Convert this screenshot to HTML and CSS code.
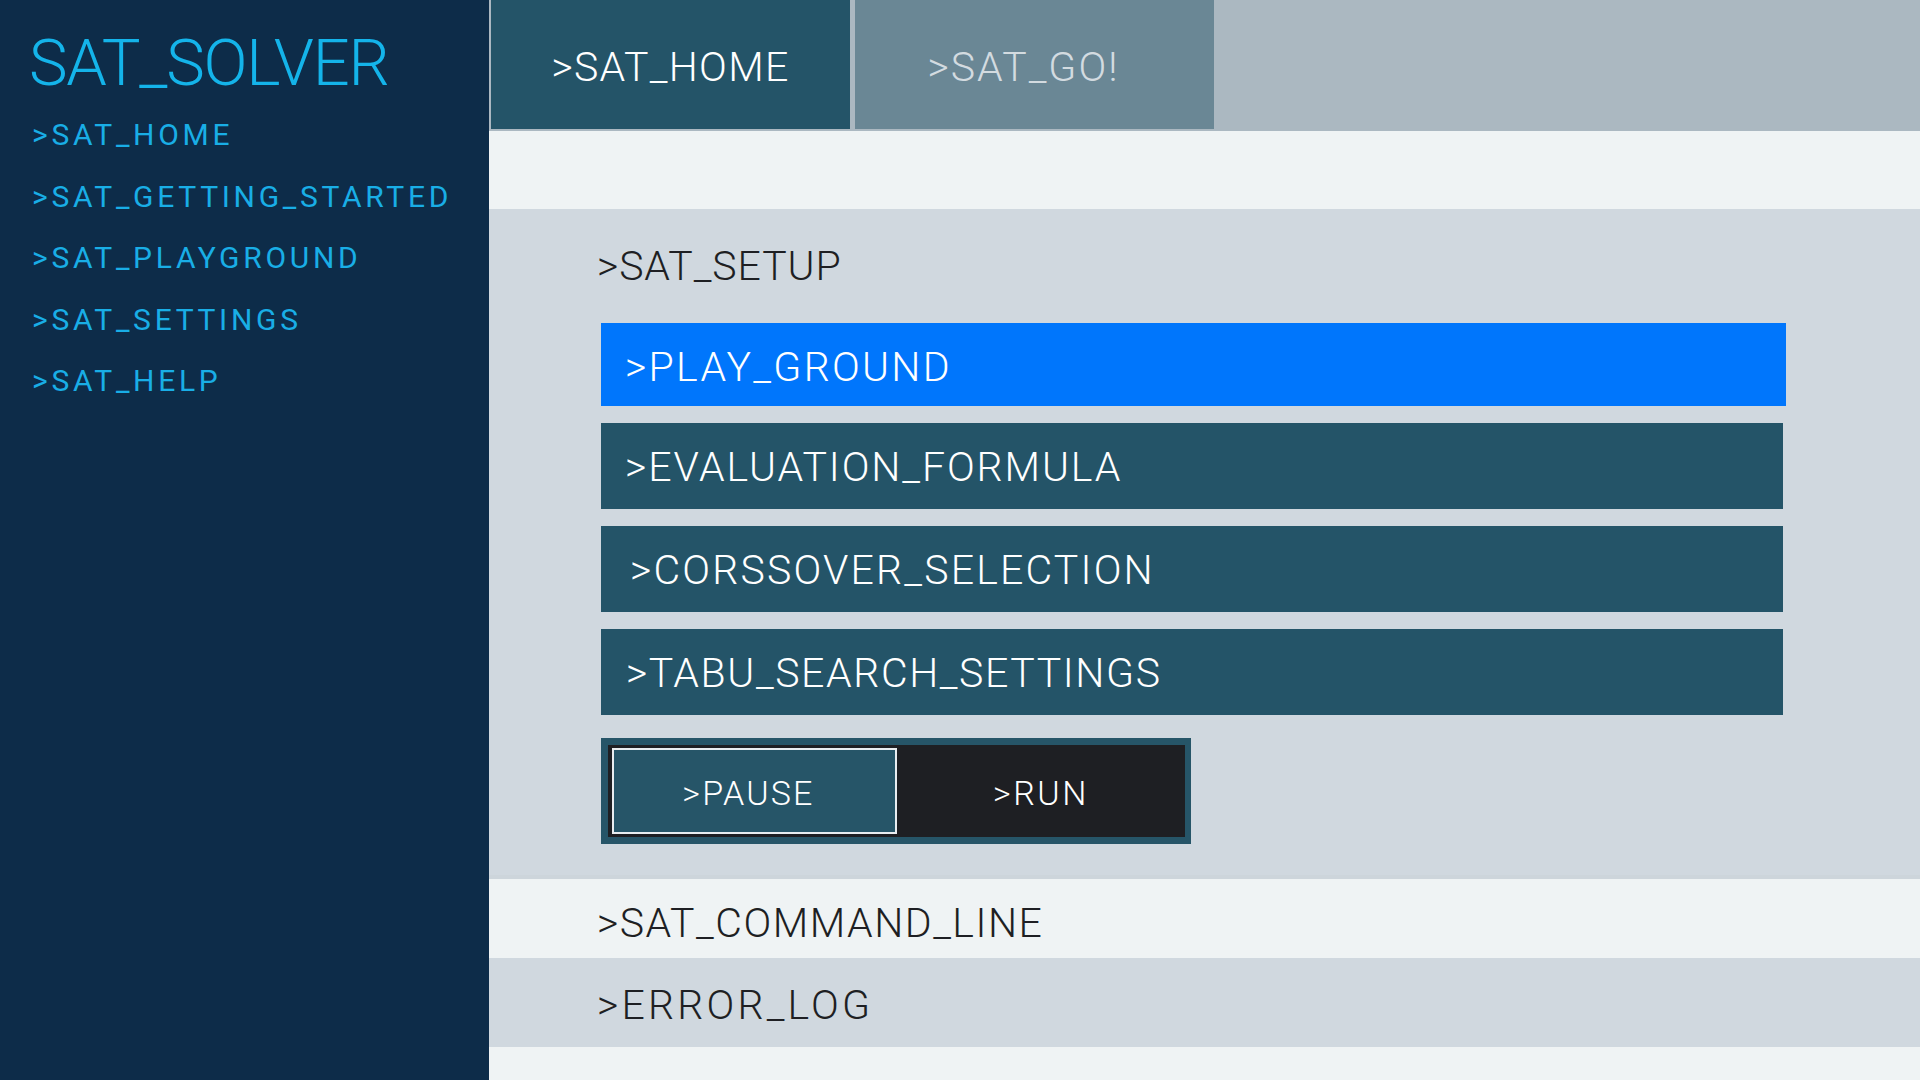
FILE: index.html
```html
<!DOCTYPE html>
<html lang="en">
<head>
<meta charset="utf-8">
<title>SAT_SOLVER</title>
<link rel="stylesheet" href="styles.css">
</head>
<body>
<div class="app">
  <aside class="sidebar">
    <h1 class="brand">SAT_SOLVER</h1>
    <nav class="side-nav">
      <a class="side-link">&gt;SAT_HOME</a>
      <a class="side-link">&gt;SAT_GETTING_STARTED</a>
      <a class="side-link">&gt;SAT_PLAYGROUND</a>
      <a class="side-link">&gt;SAT_SETTINGS</a>
      <a class="side-link">&gt;SAT_HELP</a>
    </nav>
  </aside>
  <main class="main">
    <header class="tabbar">
      <div class="tab tab-active">&gt;SAT_HOME</div>
      <div class="tab tab-muted">&gt;SAT_GO!</div>
    </header>
    <div class="band-light band-top"></div>
    <section class="setup">
      <h2 class="section-title">&gt;SAT_SETUP</h2>
      <div class="option-list">
        <div class="option option-active">&gt;PLAY_GROUND</div>
        <div class="option">&gt;EVALUATION_FORMULA</div>
        <div class="option option-indent">&gt;CORSSOVER_SELECTION</div>
        <div class="option option-indent-sm">&gt;TABU_SEARCH_SETTINGS</div>
      </div>
      <div class="toggle">
        <div class="toggle-btn toggle-on">&gt;PAUSE</div>
        <div class="toggle-btn">&gt;RUN</div>
      </div>
    </section>
    <div class="row row-light">&gt;SAT_COMMAND_LINE</div>
    <div class="row row-gray row-wide">&gt;ERROR_LOG</div>
    <div class="band-light band-fill"></div>
  </main>
</div>
</body>
</html>
```

FILE: styles.css
```css
* { box-sizing: border-box; }

html, body {
  margin: 0;
  padding: 0;
  height: 100%;
}

body {
  font-family: "Roboto", "Liberation Sans", sans-serif;
  font-weight: 300;
  background: #eff3f4;
}

.app {
  display: flex;
  width: 1920px;
  height: 1080px;
  overflow: hidden;
}

/* ---------- Sidebar ---------- */
.sidebar {
  width: 489px;
  flex: 0 0 489px;
  background: #0d2c49;
  padding: 23px 0 0 30px;
}

.brand {
  margin: 0 0 0 -1px;
  font-size: 65px;
  line-height: 80px;
  font-weight: 300;
  color: #14b4ea;
  letter-spacing: -1.2px;
}

.side-nav {
  display: flex;
  flex-direction: column;
  margin: 1px 0 0 2px;
}

.side-link {
  display: block;
  font-size: 30px;
  line-height: 61.5px;
  font-weight: 400;
  letter-spacing: 3.7px;
  color: #19aee6;
}

/* ---------- Main ---------- */
.main {
  flex: 1;
  display: flex;
  flex-direction: column;
  min-width: 0;
}

.tabbar {
  height: 131px;
  flex: 0 0 131px;
  background: #abb8c1;
  display: flex;
  gap: 5px;
  padding-left: 2px;
  align-items: flex-start;
}

.tab {
  width: 359px;
  height: 129px;
  display: flex;
  align-items: center;
  justify-content: center;
  padding-top: 5px;
  font-size: 41px;
  font-weight: 300;
  letter-spacing: 1.3px;
}

.tab-active {
  background: #245468;
  color: #ffffff;
}

.tab-muted {
  background: #6a8795;
  color: #d3dbe0;
  padding-right: 22px;
  letter-spacing: 2px;
}

.band-light {
  background: #eff3f4;
}

.band-top {
  height: 78px;
  flex: 0 0 78px;
}

.band-fill {
  flex: 1;
}

.setup {
  background: #d0d8df;
  height: 670px;
  flex: 0 0 670px;
  padding: 33px 0 0 108px;
  border-bottom: 4px solid #cdd5db;
}

.section-title {
  margin: 0;
  font-size: 41px;
  line-height: 48px;
  font-weight: 300;
  color: #1e1f23;
  letter-spacing: 0.9px;
}

.option-list {
  margin: 33px 0 0 4px;
  display: flex;
  flex-direction: column;
  gap: 17px;
}

.option {
  width: 1182px;
  height: 86px;
  background: #245468;
  color: #ffffff;
  display: flex;
  align-items: center;
  padding: 1px 0 0 24px;
  font-size: 41px;
  font-weight: 300;
  letter-spacing: 1.9px;
}

.option-active {
  width: 1185px;
  height: 83px;
  padding-top: 5px;
  background: #0076fc;
  letter-spacing: 2.3px;
}

.option-indent { padding-left: 29px; letter-spacing: 2.2px; }
.option-indent-sm { padding-left: 25px; letter-spacing: 1.6px; }

.toggle {
  margin: 23px 0 0 4px;
  width: 590px;
  height: 106px;
  border: 7px solid #265568;
  border-right-width: 6px;
  background: #1e1f23;
  padding: 3px 0 3px 4px;
  display: flex;
}

.toggle-btn {
  flex: 1;
  display: flex;
  align-items: center;
  justify-content: center;
  padding-top: 4px;
  font-size: 34px;
  font-weight: 300;
  color: #ffffff;
  letter-spacing: 2.6px;
}

.toggle-on {
  flex: 0 0 285px;
  background: #265568;
  border: 2px solid #e8edf0;
  padding-right: 12px;
  letter-spacing: 2.2px;
}

.row {
  display: flex;
  align-items: center;
  padding-left: 108px;
  font-size: 41px;
  font-weight: 300;
  color: #1e1f23;
  letter-spacing: 1.5px;
}

.row-light {
  background: #eff3f4;
  height: 79px;
  flex: 0 0 79px;
  padding-top: 8px;
}

.row-gray {
  background: #d0d8df;
  height: 89px;
  flex: 0 0 89px;
  padding-top: 5px;
}

.row-wide { letter-spacing: 3.2px; }
```
